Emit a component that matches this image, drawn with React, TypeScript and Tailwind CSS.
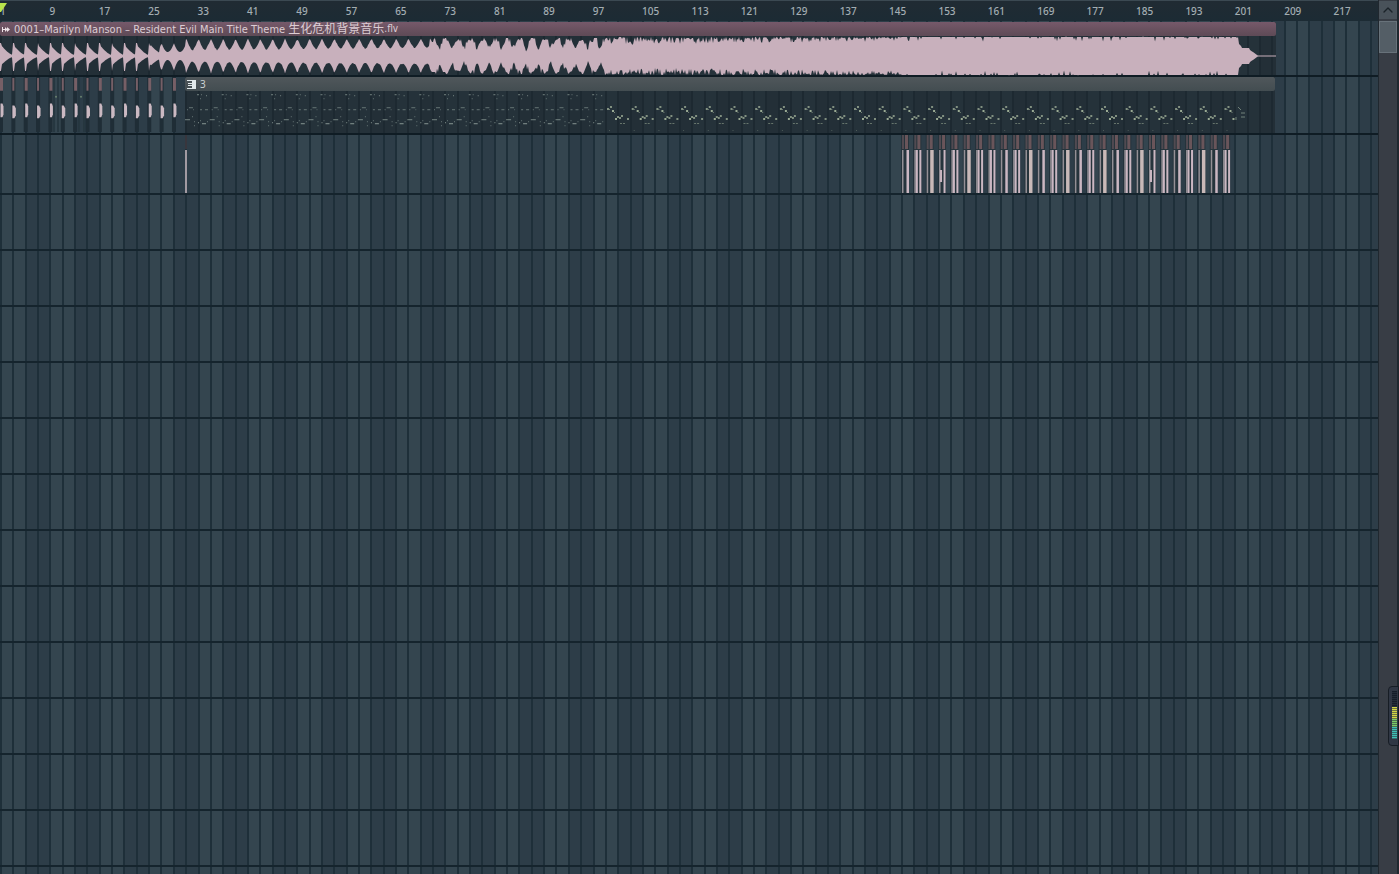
import React from "react";
import { ChevronUp } from "lucide-react";

const BEAT = 12.35;
const CLIP_WIDTH = 1276;

const bars = Array.from({ length: 27 }, (_, i) => i * 8 + 1);
const columns = Array.from({ length: 111 }, (_, i) => i);
const emptyTracks = Array.from({ length: 13 }, (_, i) => i + 4);

// repeatable noise so the peaks look the same on every render
const noise = (n: number) => {
  const v = Math.sin(n * 12.9898) * 43758.5453;
  return v - Math.floor(v);
};

const peakAt = (x: number, lower: boolean) => {
  const p = (x % BEAT) / BEAT;
  const seed = lower ? 400 : 0;
  const d = Math.min(Math.abs(p - 0.08), 1 - Math.abs(p - 0.08));
  if (x < 160) {
    if (p < 0.14) return lower ? 15 : 13;
    return (lower ? 9 : 11) * Math.pow(1 - p, 1.4) + (x > 150 ? 3 : 1.2);
  }
  if (x < 186) return 4 + (lower ? 11 : 9) * Math.pow(1 - d * 2, 2);
  if (x < 430) {
    const base = 5 + (x - 186) / 100;
    return base + (17 - base) * Math.pow(1 - d * 2, lower ? 2 : 1.4) + noise(x + seed);
  }
  if (x < 605) {
    const valley = Math.max(0, 1 - Math.abs(p - 0.6) * 3);
    const spike = noise(x + seed) > 0.8 ? 4 : 0;
    return Math.min(18, 18 - valley * 10 - noise(Math.floor(x / 2) + seed) * 4 + spike);
  }
  if (x < 902) {
    const depth = 8 - (x - 605) / 80;
    return 19 - Math.pow(noise(x + seed), 1.8) * depth;
  }
  if (x < 1239) return 19.5 - (noise(x + seed) > 0.86 ? 5 * noise(x + seed + 9) : 0.5);
  if (x < 1242) return 12 - (x - 1239);
  if (x < 1250) return 8;
  if (x < 1258) return 6 - (x - 1250) * 0.7;
  return 0.5;
};

const wavePath = () => {
  const top: string[] = [];
  const bottom: string[] = [];
  for (let x = 0; x <= CLIP_WIDTH; x++) {
    top.push(`${x} ${(20 - peakAt(x, false)).toFixed(1)}`);
    bottom.unshift(`${x} ${(20 + peakAt(x, true)).toFixed(1)}`);
  }
  return `M${top.join("L")}L${bottom.join("L")}Z`;
};

// [x, y, width, opacity] of the notes inside one repeat of the pattern
const introNotes = [
  [12, 3, 2, 0.5], [16, 3, 1, 0.4], [21, 4, 1, 0.5], [15, 7, 1, 0.4],
  [2, 18, 1, 0.4], [4, 16, 4, 0.4], [8, 18, 1, 0.3], [15, 18, 2, 0.4], [20, 18, 3, 0.4],
  [0, 28, 5, 0.5], [7, 25, 1, 0.4], [9, 30, 1, 0.4], [9, 34, 1, 0.4], [13, 31, 1, 0.6],
  [15, 29, 1, 0.4], [17, 32, 4, 0.6], [22, 30, 1, 0.4],
];
const mainNotes = [
  [2, 17, 2, 0.7], [4, 18, 1, 0.6], [5, 15, 2, 0.7], [7, 19, 2, 0.9], [9, 21, 1, 0.6],
  [10, 27, 2, 0.9], [12, 25, 2, 0.7], [14, 26, 2, 0.7], [16, 24, 2, 0.7],
  [15, 32, 2, 0.5], [18, 32, 2, 0.5], [22, 27, 2, 0.7], [4, 39, 1, 0.3],
];

const hits = "ABCDBCBBABCABCABCABCDBABCAB".split("");

const Grid = () => (
  <div className="absolute inset-0 flex" aria-hidden="true">
    {columns.map((i) => (
      <div
        key={i}
        className={`min-w-0 grow-5 basis-0 border-l-2 border-[#1e2f39] ${i % 4 < 2 ? "bg-[#34454f]" : "bg-[#2d3d48]"}`}
      />
    ))}
    <div className="min-w-0 grow-3 basis-0 border-l-2 border-[#1e2f39] bg-[#2d3d48]" />
  </div>
);

const Ruler = () => (
  <header className="relative flex h-[21px] border-t border-[#3b4952] bg-linear-to-b from-[#202b33] to-[#1c2b34] text-[10px] leading-5 font-medium text-[#a3adb2]">
    {bars.map((bar) => (
      <span key={bar} className="min-w-0 grow-10 basis-0">{bar}</span>
    ))}
    <span className="min-w-0 grow-9 basis-0">217</span>
    <svg className="absolute top-0.5 left-0 h-2.5 w-2" viewBox="0 0 8 10">
      <path d="M0 0H7L1 9H0Z" fill="#b9e34b" />
    </svg>
  </header>
);

const AudioClip = () => (
  <div className="h-full w-[92.6%] bg-[#1c272d]/60">
    <div className="flex h-3.5 items-center overflow-hidden rounded-xs bg-linear-to-b from-[#76596a] to-[#5e4a56] pl-0.5 font-['DejaVu_Sans_Condensed','Noto_Sans_CJK_SC',sans-serif] text-[11px] leading-none whitespace-nowrap text-[#dccdd4]">
      <svg className="mr-1 h-[7px] w-2" viewBox="0 0 8 7" fill="#eee3e8">
        <path d="M0 1H1V3H3V1L5 3V1L8 3.5L5 6V4L3 6V4H1V6H0Z" />
      </svg>
      <span>0001–Marilyn Manson – Resident Evil Main Title Theme&nbsp;</span>
      <span className="text-xs leading-none">生化危机背景音乐</span>
      <span className="text-[10px] leading-none">.flv</span>
    </div>
    <svg className="block h-10 w-full" viewBox="0 0 1276 40" preserveAspectRatio="none">
      <path d={wavePath()} fill="#c8b0bc" />
    </svg>
  </div>
);

const KickClips = () => (
  <svg className="block h-full w-[13.43%]" viewBox="0 0 185 57" preserveAspectRatio="none">
    {Array.from({ length: 15 }, (_, i) => (
      <g key={i}>
        <rect x={i * BEAT - 1} y="0" width="4" height="56" fill="#1f2d36" />
        <rect x={i * BEAT} y="1" width={i % 2 ? 2 : 3} height="13" fill="#765f66" />
        <path d={i % 2 ? `M${i * BEAT} 29h2l1.5 3v7l-1.5 3h-2z` : `M${i * BEAT + 0.5} 27h2l1 3v8l-1 3h-2z`} fill="#cbb9c2" />
      </g>
    ))}
    {[53, 57, 78, 83].map((x) => (
      <rect key={x} x={x} y="0" width="2" height="56" fill="#263740" />
    ))}
    <circle cx="56" cy="20" r="1" fill="#69816f" />
    <circle cx="81" cy="20" r="1" fill="#69816f" />
  </svg>
);

const PatternClip = () => (
  <div className="h-full w-[79.1%] bg-[#1c272d]/60">
    <div className="flex h-3.5 items-center gap-1 rounded-xs bg-linear-to-b from-[#50575b] to-[#434d51] pl-0.5 text-[10px] leading-none text-[#cbd3d5]">
      <svg className="h-[9px] w-[9px]" viewBox="0 0 9 9" fill="#e1e8ea">
        <path d="M0 0H9V9H0V8H5V6H1V5H5V4H1V3H5V1H0Z" />
      </svg>
      3
    </div>
    <svg className="block h-[42px] w-full" viewBox="0 0 1090 42" preserveAspectRatio="none">
      {Array.from({ length: 17 }, (_, i) =>
        introNotes.map(([x, y, w, o], j) => (
          <rect key={`${i}-${j}`} x={i * 24.7 + x} y={y} width={w} height="1.3" fill="#a3b3ac" opacity={o} />
        ))
      )}
      {Array.from({ length: 26 }, (_, i) =>
        mainNotes
          .filter(([x]) => i < 25 || x < 12)
          .map(([x, y, w, o], j) => (
            <rect key={`${i}-${j}`} x={420 + i * 24.7 + x} y={y} width={w} height={o > 0.6 ? 2 : 1} fill="#a9b99f" opacity={o} />
          ))
      )}
      <path d="M1053 16l3 3M1056 22h4M1056 26h4M1051 26v3" stroke="#72837a" fill="none" />
    </svg>
  </div>
);

const HitClips = () => (
  <svg className="block h-full w-full" viewBox="0 0 1378 58" preserveAspectRatio="none">
    <rect x="185" y="0" width="2" height="14" fill="#38363d" />
    <rect x="185" y="15" width="2" height="43" fill="#a29aa2" />
    {hits.map((hit, i) => (
      <g key={i} transform={`translate(${902 + i * BEAT} 0)`}>
        <rect x="-1" y="0" width="8" height="58" fill="#26343c" />
        <rect x="0" y="0" width="2" height="14" fill="#514a51" />
        <rect x="3" y="0" width="3" height="14" fill="#69555a" />
        <rect x="0" y="15" width="1.5" height="43" fill="#948f95" />
        {hit === "A" && <rect x="4.5" y="15" width="2.5" height="43" fill="#cbb7c2" />}
        {hit === "B" && <path d="M1.5 15h2v43h-2zM5 15h2v43h-2z" fill="#cbb7c2" />}
        {hit === "C" && <path d="M3.5 15h3.5v43h-3.5z" fill="#c9b9b8" />}
        {hit === "D" && <path d="M1 35h2v12h-2zM4.5 15h2v43h-2z" fill="#cbb7c2" />}
      </g>
    ))}
  </svg>
);

const Scrollbar = () => (
  <aside className="relative flex w-[21px] shrink-0 flex-col border-r-2 border-l border-[#20282f] bg-[#383d45] pt-px">
    <button aria-label="Scroll up" className="flex h-[18px] items-center justify-center bg-[#49525a] text-[#1b2329]">
      <ChevronUp size={16} strokeWidth={2} />
    </button>
    <div className="mt-0.5 h-8 border border-[#68727a] bg-[#545e66]" />
    <div className="absolute top-[686px] -right-0.5 h-[60px] w-[11px] rounded-l border border-[#171d25] bg-[#303744] py-1 pr-px pl-[3px]">
      <svg className="h-full w-full" viewBox="0 0 5 50" preserveAspectRatio="none">
        {Array.from({ length: 24 }, (_, i) => (
          <rect key={i} x="0" y={i * 2} width="5" height="1.4" fill={i < 8 ? "#161d29" : i < 14 ? "#d3d545" : i < 18 ? "#7ccb66" : "#3fc0b5"} />
        ))}
      </svg>
    </div>
  </aside>
);

export default function App() {
  return (
    <main className="flex h-screen overflow-hidden bg-[#2d3d48] font-['Noto_Sans','Noto_Sans_CJK_SC',sans-serif]">
      <div className="relative min-w-0 flex-1">
        <Grid />
        <Ruler />
        <div className="relative">
          <section className="h-14 border-b-2 border-[#0f1c24] pt-px">
            <AudioClip />
          </section>
          <section className="flex h-[58px] border-b-2 border-[#0f1c24]">
            <KickClips />
            <PatternClip />
          </section>
          <section className="h-[60px] border-b-2 border-[#15242d]">
            <HitClips />
          </section>
          {emptyTracks.map((track) => (
            <section key={track} className="h-14 border-b-2 border-[#15242d]" />
          ))}
        </div>
      </div>
      <Scrollbar />
    </main>
  );
}
